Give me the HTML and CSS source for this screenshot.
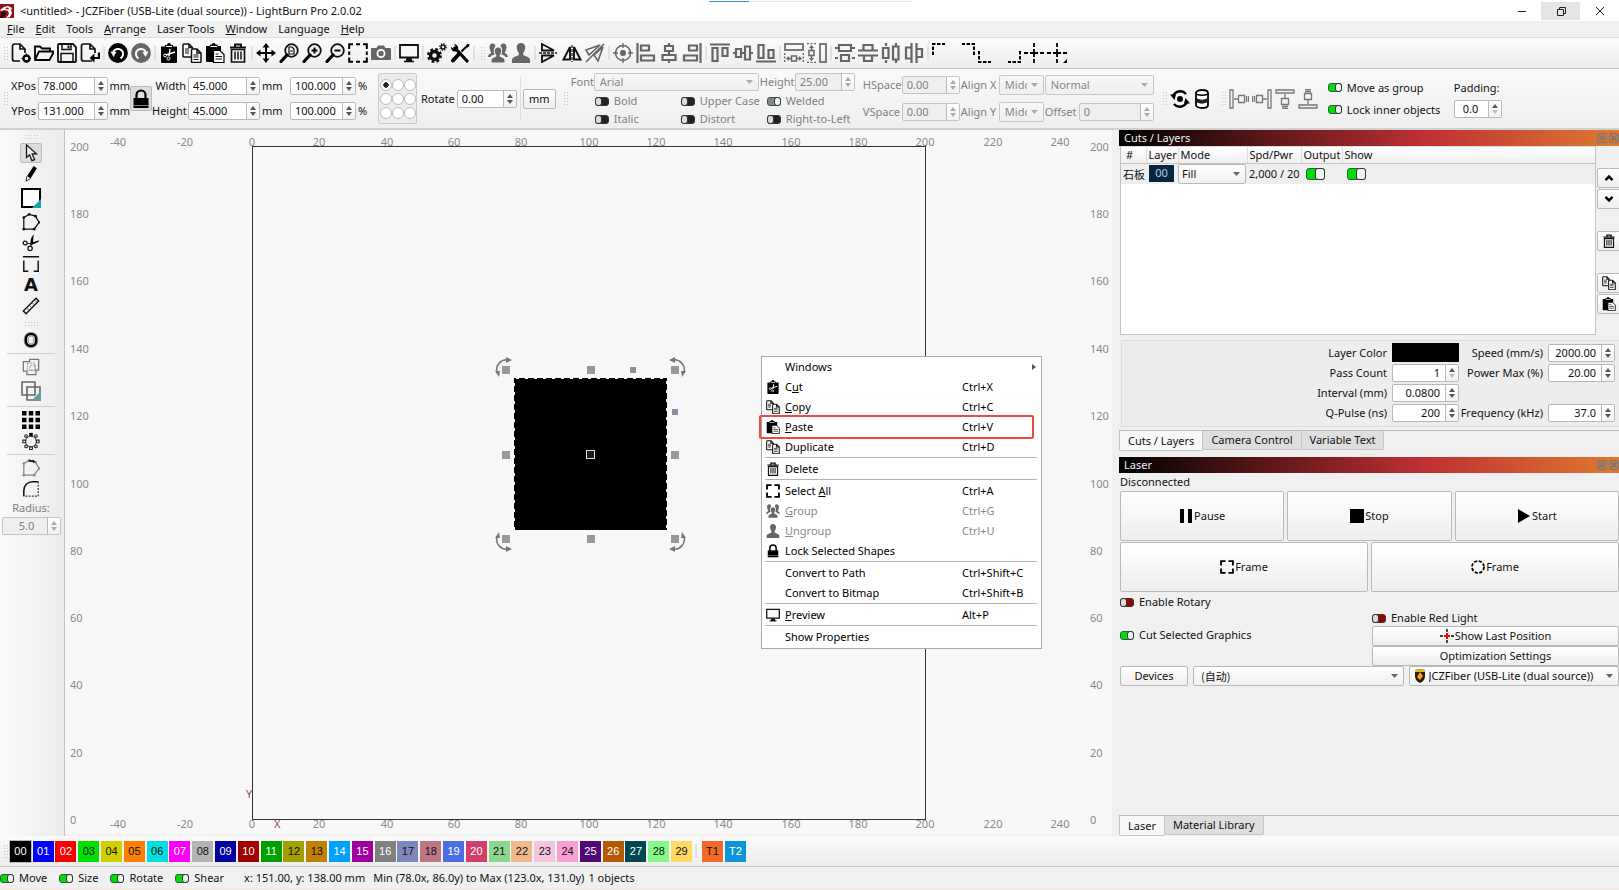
FILE: index.html
```html
<!DOCTYPE html>
<html lang="en">
<head>
<meta charset="utf-8">
<title>LightBurn Pro</title>
<link rel="stylesheet" href="styles.css">
</head>
<body>
<svg class="defs" aria-hidden="true">
  <symbol id="i-new" viewBox="0 0 20 20"><path d="M9 18H3.500a2 2 0 0 1-2-2V3a2 2 0 0 1 2-2H9l5 5v4M9 1v5h5" fill="none" stroke="#111" stroke-width="1.700"/><circle cx="15.500" cy="15.500" r="3" fill="none" stroke="#111" stroke-width="2.600"/><path d="M15.500 10.500v10M10.500 15.500h10" stroke="#111" stroke-width="1.200"/><circle cx="15.500" cy="15.500" r="1.600" fill="#fff"/></symbol>
  <symbol id="i-open" viewBox="0 0 20 20"><path d="M1 16V3.500h5l2 2h8V9" fill="none" stroke="#000" stroke-width="1.800"/><path d="M1 17 5 8.500h15L15.500 17z" fill="#f5f5f5" stroke="#000" stroke-width="1.800" stroke-linejoin="round"/></symbol>
  <symbol id="i-save" viewBox="0 0 20 20"><path d="M1 2a1 1 0 0 1 1-1h14l3 3v14a1 1 0 0 1-1 1H2a1 1 0 0 1-1-1z" fill="none" stroke="#111" stroke-width="1.800"/><path d="M5 1v5.500h9V1M4 19v-8.500h12V19" fill="none" stroke="#111" stroke-width="1.500"/><path d="M10.500 2.500h2v3h-2z" fill="#111"/></symbol>
  <symbol id="i-export" viewBox="0 0 20 20"><path d="M15 10V6l-5-5H3.500a2 2 0 0 0-2 2v13a2 2 0 0 0 2 2H12M10 1v5h5" fill="none" stroke="#111" stroke-width="1.700"/><path d="M19 9.500v5.500H13" fill="none" stroke="#000" stroke-width="2.200"/><path d="m9.500 15 5-4.500v9z" fill="#000"/></symbol>
  <symbol id="i-undo" viewBox="0 0 20 20"><circle cx="10" cy="10" r="9.900" fill="currentColor"/><path d="M5 10.500c.5-3.800 3.500-5 6-4.500 3 .6 4.800 3.500 3.800 6.500-.5 1.500-1.300 2.300-2.300 2.800" fill="none" stroke="#fff" stroke-width="2"/><path d="M2.500 8.500 8.500 9l-3 5z" fill="#fff"/></symbol>
  <symbol id="i-cut" viewBox="0 0 20 20"><path d="M2 3.500h4V2h2a2 2 0 0 1 4 0h2v1.500h4V19a1 1 0 0 1-1 1H3a1 1 0 0 1-1-1z" fill="#000"/><path d="M7 3.500h6" stroke="#fff" stroke-width="1"/><path d="m11 6-1 7M16 9l-9 3" stroke="#fff" stroke-width="1.400"/><circle cx="6" cy="12.500" r="1.400" fill="none" stroke="#fff"/><circle cx="9.500" cy="15.500" r="1.500" fill="none" stroke="#fff"/></symbol>
  <symbol id="i-copy" viewBox="0 0 20 20"><path d="M1 14V2a1 1 0 0 1 1-1h5l3.500 3.500V14H2a1 1 0 0 1-1-1zM7 1v3.500h3.500" fill="#fafafa" stroke="#111" stroke-width="1.500"/><path d="M3 6h4M3 8h4M3 10h4" stroke="#111"/><path d="M9.500 18V7a1 1 0 0 1 1-1H15l4 4v8.500a1 1 0 0 1-1 1h-7.500a1 1 0 0 1-1-1zM15 6v4h4" fill="#fafafa" stroke="#111" stroke-width="1.500"/><path d="M11.500 12h5M11.500 14h5M11.500 16.500h5" stroke="#111"/></symbol>
  <symbol id="i-paste" viewBox="0 0 20 20"><path d="M1 3h4V1.500h2a1.800 1.800 0 0 1 3.500 0h2V3H16v16H2a1 1 0 0 1-1-1z" fill="#000"/><path d="M5.500 3.500h6.500" stroke="#fff"/><path d="M8.500 7.500h6.500l4 4v8H8.500z" fill="#fff" stroke="#000" stroke-width="1.200"/><path d="M10.500 11h3M10.500 13.500h6.500M10.500 16h6.500" stroke="#111"/></symbol>
  <symbol id="i-trash" viewBox="0 0 20 20"><path d="M2 4.500h16M7 4V1.500h6V4" fill="none" stroke="#111" stroke-width="1.900"/><path d="M3.500 6.500h13V19h-13z" fill="none" stroke="#111" stroke-width="1.700"/><path d="M7 8.500v8M10 8.500v8M13 8.500v8" stroke="#111" stroke-width="1.500"/></symbol>
  <symbol id="i-move" viewBox="0 0 20 20"><path d="M10 2v16M2 10h16" stroke="#000" stroke-width="2"/><path d="m10 0 3.500 4.500h-7zM10 20l3.500-4.500h-7zM0 10l4.500-3.500v7zM20 10l-4.500-3.500v7z" fill="#000"/></symbol>
  <symbol id="i-lens" viewBox="0 0 20 20"><circle cx="12.500" cy="7.500" r="6.300" fill="none" stroke="#111" stroke-width="1.800"/><path d="m8 12-6 6.500" stroke="#000" stroke-width="3.200" stroke-linecap="round"/></symbol>
  <symbol id="i-marquee" viewBox="0 0 20 20"><path d="M1.200 6V1.200H5M8 1.200h4M15 1.200h3.800V6M18.800 8.500v3.500M18.800 14.500v4.300H15M12 18.800H8M5 18.800H1.200V14.500M1.200 12V8.500" fill="none" stroke="#000" stroke-width="2"/></symbol>
  <symbol id="i-monitor" viewBox="0 0 20 20"><path d="M1 2h18v12.500H1z" fill="#f8f8f8" stroke="#111" stroke-width="1.800"/><path d="M7.500 15h5l1 3.500h-7z" fill="#111"/><path d="M5 18.500h10" stroke="#111" stroke-width="1.500"/></symbol>
  <symbol id="i-user" viewBox="0 0 20 20"><path d="M10 0c3 0 4.500 2.200 4.200 5-.3 2.500-1.300 4-2 5v2c1 1 6.300 1.800 6.800 4.500.2 1.500 0 3.500 0 3.500H1s-.2-2 0-3.500C1.500 13.800 6.800 13 7.800 12v-2c-.7-1-1.700-2.500-2-5C5.500 2.200 7 0 10 0z" fill="#666"/></symbol>
  <symbol id="i-users" viewBox="0 0 20 20"><g fill="#666"><path d="M10 4.500c2.500 0 3.500 1.800 3.200 4-.2 1.800-1 2.800-1.500 3.500v1.500c.8.8 4.300 1.200 4.800 3.500v2.500h-13V17c.5-2.300 4-2.700 4.800-3.500V12c-.5-.7-1.300-1.700-1.500-3.500-.3-2.200.7-4 3.200-4z"/><path d="M4.500.5c2 0 3 1.300 2.800 3C5.500 5 5.500 9 6.500 11.500 6 12.200 3 12 2.800 14H0c0-3 3-3.200 3.300-4.500C2 8 1.500 5.500 1.500 4 1.700 2 2.500.5 4.500.5zM15.500.5c-2 0-3 1.300-2.800 3 1.800 1.500 1.800 5.500.8 8 .5.700 3.500.5 3.700 2.500H20c0-3-3-3.200-3.300-4.500C18 8 18.500 5.500 18.500 4c-.2-2-1-3.500-3-3.500z"/></g></symbol>
  <symbol id="i-lock" viewBox="0 0 20 20"><path d="M5.500 10V6a4.500 4.500 0 0 1 9 0v4" fill="none" stroke="#000" stroke-width="2.200"/><path d="M2.500 9h15v10h-15z" fill="#000"/><path d="M2.500 16.500h15" stroke="#999" stroke-width=".8"/></symbol>
  <symbol id="i-frame" viewBox="0 0 20 20"><path d="M1.500 8V1.500H8M12 1.500h6.500V8M18.500 12v6.500H12M8 18.500H1.500V12" fill="none" stroke="#000" stroke-width="2.600"/></symbol>
  <symbol id="i-poly" viewBox="0 0 20 20"><path d="M2 5 8 1.500l7 2 4 7L13.500 18H2z" fill="none" stroke="currentColor" stroke-width="1.400"/><g fill="currentColor"><circle cx="2" cy="5" r="1.500"/><circle cx="8" cy="1.500" r="1.500"/><circle cx="15" cy="3.500" r="1.500"/><circle cx="19" cy="10.500" r="1.300"/><circle cx="13.500" cy="18" r="1.500"/><circle cx="2" cy="18" r="1.500"/></g></symbol>
  <symbol id="i-dock" viewBox="0 0 22 10"><g fill="none" stroke="#777" stroke-width="1"><rect x=".5" y=".5" width="9" height="9" rx="1"/><rect x="3" y="3" width="4" height="4"/><path d="m1 9 8-8M1 1l8 8"/><rect x="12.500" y=".5" width="9" height="9" rx="1"/><path d="m14 2 6 6M20 2l-6 6" stroke-width="1.800"/></g></symbol>
</svg>

<header class="titlebar">
  <svg class="logo" viewBox="0 0 14 14"><rect width="14" height="14" fill="#8e1220"/><path d="M0 6 4 3l4-1 4 2-1 2 1 3-2 4-4 1 3-4-1-3-3-1-4 1z" fill="#fff"/><path d="m1 9 3-2 2 2-2 5H0z" fill="#3b0509"/><path d="m5 4 3-.5 1 1.500-2 .5z" fill="#8e1220"/></svg>
  <h1>&lt;untitled&gt; - JCZFiber (USB-Lite (dual source)) - LightBurn Pro 2.0.02</h1>
  <div class="loadbar"><i></i></div>
  <div class="winbtns">
    <button aria-label="Minimize"><svg viewBox="0 0 12 12"><path d="M2 6.500h8" stroke="#222" fill="none"/></svg></button>
    <button aria-label="Restore" class="hot"><svg viewBox="0 0 12 12"><path d="M2.500 4.500h6v6h-6zM4.500 4V2.500h6v6H9" stroke="#222" fill="none"/></svg></button>
    <button aria-label="Close"><svg viewBox="0 0 12 12"><path d="m2 2 8 8M10 2l-8 8" stroke="#222" fill="none"/></svg></button>
  </div>
</header>

<nav class="menubar">
  <a href="#"><u>F</u>ile</a><a href="#"><u>E</u>dit</a><a href="#">Tools</a><a href="#"><u>A</u>rrange</a><a href="#">Laser Tools</a><a href="#"><u>W</u>indow</a><a href="#">Language</a><a href="#"><u>H</u>elp</a>
</nav>

<div class="toolbar">
  <div class="tools">
    <span class="grip"></span>
    <button aria-label="New"><svg><use href="#i-new"/></svg></button>
    <button aria-label="Open"><svg><use href="#i-open"/></svg></button>
    <button aria-label="Save"><svg><use href="#i-save"/></svg></button>
    <button aria-label="Export"><svg><use href="#i-export"/></svg></button>
    <hr>
    <button aria-label="Undo"><svg><use href="#i-undo"/></svg></button>
    <button aria-label="Redo" class="dim"><svg viewBox="0 0 20 20"><use href="#i-undo" transform="matrix(-1 0 0 1 20 0)" width="20" height="20"/></svg></button>
    <hr>
    <button aria-label="Cut"><svg><use href="#i-cut"/></svg></button>
    <button aria-label="Copy"><svg><use href="#i-copy"/></svg></button>
    <button aria-label="Paste"><svg><use href="#i-paste"/></svg></button>
    <button aria-label="Delete"><svg><use href="#i-trash"/></svg></button>
    <hr>
    <button aria-label="Pan"><svg><use href="#i-move"/></svg></button>
    <button aria-label="Zoom to page"><svg viewBox="0 0 20 20"><use href="#i-lens" width="20" height="20"/><path d="M10 4h3l2 2v5h-5zM11 8h3" fill="none" stroke="#111" stroke-width="1.200"/></svg></button>
    <button aria-label="Zoom in"><svg viewBox="0 0 20 20"><use href="#i-lens" width="20" height="20"/><path d="M9.500 7.500h6M12.500 4.500v6" stroke="#000" stroke-width="2"/></svg></button>
    <button aria-label="Zoom out"><svg viewBox="0 0 20 20"><use href="#i-lens" width="20" height="20"/><path d="M9.500 7.500h6" stroke="#000" stroke-width="2"/></svg></button>
    <button aria-label="Frame selection"><svg><use href="#i-marquee"/></svg></button>
    <button aria-label="Camera"><svg viewBox="0 0 20 20"><path d="M1 5h4.500L7 2.500h6L14.500 5H19a1 1 0 0 1 1 1v10a1 1 0 0 1-1 1H1a1 1 0 0 1-1-1V6a1 1 0 0 1 1-1z" fill="#666"/><circle cx="10" cy="10.500" r="3.600" fill="none" stroke="#fff" stroke-width="1.700"/></svg></button>
    <hr>
    <button aria-label="Preview"><svg><use href="#i-monitor"/></svg></button>
    <hr>
    <button aria-label="Settings"><svg viewBox="0 0 20 20"><circle cx="7.500" cy="12.500" r="4" fill="none" stroke="#111" stroke-width="3.400"/><circle cx="7.500" cy="12.500" r="6.300" fill="none" stroke="#111" stroke-width="2.400" stroke-dasharray="2.700 2.250"/><circle cx="16" cy="4" r="2" fill="none" stroke="#111" stroke-width="1.500"/><circle cx="16" cy="4" r="3.300" fill="none" stroke="#111" stroke-width="1.200" stroke-dasharray="1.300 1.290"/></svg></button>
    <button aria-label="Device settings"><svg viewBox="0 0 20 20"><path d="M5 5 17 18" stroke="#000" stroke-width="3.200" stroke-linecap="round"/><path d="M1 4a4 4 0 0 0 6 4l1-2a4 4 0 0 0-4-5l2 3-2 2z" fill="#000"/><path d="m18.500 1.500-7 7" stroke="#000" stroke-width="2"/><path d="M9.500 10.500 3 17.500" stroke="#000" stroke-width="4" stroke-linecap="round"/><path d="m19.500 1-2.500.5-2 3 1 1 3-2z" fill="#000"/></svg></button>
    <hr>
  </div>
  <div class="tools">
    <span class="grip"></span>
    <button aria-label="Group"><svg><use href="#i-users"/></svg></button>
    <button aria-label="Ungroup"><svg><use href="#i-user"/></svg></button>
    <hr>
    <button aria-label="Flip vertical"><svg viewBox="0 0 20 20"><path d="M3 1 15 7.500H3zM3 12.500h12L3 19z" fill="none" stroke="#111" stroke-width="1.900"/><path d="M0 10h18" stroke="#111" stroke-width="1.400" stroke-dasharray="3 1"/></svg></button>
    <button aria-label="Flip horizontal"><svg viewBox="0 0 20 20"><path d="M8 4v12.500H1.500zM12 4v12.500h6.500z" fill="none" stroke="#111" stroke-width="1.900"/><path d="M10 2v17" stroke="#111" stroke-width="1.200" stroke-dasharray="3 1"/></svg></button>
    <button aria-label="Mirror across line"><svg viewBox="0 0 20 20"><path d="m1 7 14-5L4 12zM18 4l-5 14-4-6zM1 19 19 1" fill="none" stroke="#666" stroke-width="1.600"/></svg></button>
    <hr>
    <button aria-label="Move to centre"><svg viewBox="0 0 20 20"><circle cx="10" cy="10" r="7.500" fill="none" stroke="#666" stroke-width="1.500"/><circle cx="10" cy="10" r="3" fill="#666"/><path d="M10 0v5M10 15v5M0 10h5M15 10h5" stroke="#666" stroke-width="1.300"/></svg></button>
    <button aria-label="Align left"><svg viewBox="0 0 20 20"><path d="M1.500 0v20M5 2.500h8v5H5zM5 12.500h13v5H5z" fill="none" stroke="#666" stroke-width="2.200"/></svg></button>
    <button aria-label="Align centre"><svg viewBox="0 0 20 20"><path d="M10 0v3M10 8v4M10 17v3M6 3h8v5H6zM3.500 12h13v5h-13z" fill="none" stroke="#666" stroke-width="2.200"/></svg></button>
    <button aria-label="Align right"><svg viewBox="0 0 20 20"><path d="M18.500 0v20M7 2.500h8v5H7zM2 12.500h13v5H2z" fill="none" stroke="#666" stroke-width="2.200"/></svg></button>
    <hr>
    <button aria-label="Align top"><svg viewBox="0 0 20 20"><path d="M0 1.500h20M2.500 5h5v13h-5zM12.500 5h5v8h-5z" fill="none" stroke="#666" stroke-width="2.200"/></svg></button>
    <button aria-label="Align middle"><svg viewBox="0 0 20 20"><path d="M0 10h3M8 10h4M17 10h3M3 6h5v8H3zM12 3.500h5v13h-5z" fill="none" stroke="#666" stroke-width="2.200"/></svg></button>
    <button aria-label="Align bottom"><svg viewBox="0 0 20 20"><path d="M0 18.500h20M2.500 2h5v13h-5zM12.500 7h5v8h-5z" fill="none" stroke="#666" stroke-width="2.200"/></svg></button>
    <hr>
    <button aria-label="Same width"><svg viewBox="0 0 20 20"><rect x="1" y="1" width="18" height="6" fill="none" stroke="#666" stroke-width="1.700"/><path d="M.7 10v10M19.300 10v10" stroke="#666" stroke-width="1.300" stroke-dasharray="2 1.500"/><path d="M7.500 13h5v5h-5zM3 15.500h4M13 15.500h4" fill="none" stroke="#666" stroke-width="1.500"/><path d="m2 15.500 3-2.500v5zM18 15.500 15 13v5z" fill="#666"/></svg></button>
    <button aria-label="Same height"><svg viewBox="0 0 20 20"><rect x="13" y="1" width="6" height="18" fill="none" stroke="#666" stroke-width="1.700"/><path d="M0 .7h10M0 19.300h10" stroke="#666" stroke-width="1.300" stroke-dasharray="2 1.500"/><path d="M2 7.500h5v5H2zM4.500 3v4M4.500 13v4" fill="none" stroke="#666" stroke-width="1.500"/><path d="m4.500 2 2.500 3H2zM4.500 18 2 15h5z" fill="#666"/></svg></button>
    <hr>
    <button aria-label="Distribute vertical centred"><svg viewBox="0 0 20 20"><path d="M0 5h3M17 5h3M0 15h3M17 15h3M4 2h12v6H4zM6 12h8v6H6z" fill="none" stroke="#666" stroke-width="2.200"/></svg></button>
    <button aria-label="Distribute vertical"><svg viewBox="0 0 20 20"><path d="M0 7.500h20M0 12.500h20M5.500 2h9v5.500h-9zM6 12.500h8V18H6z" fill="none" stroke="#666" stroke-width="2.200"/></svg></button>
    <button aria-label="Distribute horizontal centred"><svg viewBox="0 0 20 20"><path d="M5 0v3M5 17v3M15 0v3M15 17v3M2 5h5.500v10H2zM12 3.500h5.500v13H12z" fill="none" stroke="#666" stroke-width="2.200"/></svg></button>
    <button aria-label="Distribute horizontal"><svg viewBox="0 0 20 20"><path d="M7.500 0v20M12.500 0v20M2 4.500h5.500v11H2zM12.500 6H18v8h-5.500z" fill="none" stroke="#666" stroke-width="2.200"/></svg></button>
    <hr>
    <button aria-label="Move to upper left"><svg viewBox="0 0 20 20"><path d="M1 12V1h12" fill="none" stroke="#000" stroke-width="2" stroke-dasharray="3.500 1.500"/></svg></button>
    <button aria-label="Move to upper right"><svg viewBox="0 0 20 20"><path d="M19 12V1H7" fill="none" stroke="#000" stroke-width="2" stroke-dasharray="3.500 1.500"/></svg></button>
    <button aria-label="Move to lower left"><svg viewBox="0 0 20 20"><path d="M1 8v11h12" fill="none" stroke="#000" stroke-width="2" stroke-dasharray="3.500 1.500"/></svg></button>
    <button aria-label="Move to lower right"><svg viewBox="0 0 20 20"><path d="M19 8v11H7" fill="none" stroke="#000" stroke-width="2" stroke-dasharray="3.500 1.500"/></svg></button>
    <button aria-label="Move to page centre"><svg viewBox="0 0 20 20"><path d="M10 0v4M10 6v8M10 16v4M0 10h4M6 10h8M16 10h4" stroke="#000" stroke-width="1.800"/></svg></button>
    <button aria-label="Move laser here"><svg viewBox="0 0 20 20"><path d="M10 0v4M10 6v8M10 16v4M0 10h4M6 10h8M16 10h4" stroke="#000" stroke-width="1.800"/><path d="M20 16v4h-4z"/></svg></button>
  </div>
</div>

<div class="props">
  <span class="grip"></span>
  <div class="pos">
    <label for="xp">XPos</label><span class="spin"><input id="xp" value="78.000"><i></i></span><span>mm</span>
    <label for="yp">YPos</label><span class="spin"><input id="yp" value="131.000"><i></i></span><span>mm</span>
  </div>
  <button class="lock" aria-label="Lock aspect"><svg><use href="#i-lock"/></svg></button>
  <div class="size">
    <label for="w">Width</label><span class="spin"><input id="w" value="45.000"><i></i></span><span>mm</span><span class="spin"><input aria-label="Width percent" value="100.000"><i></i></span><span>%</span>
    <label for="h">Height</label><span class="spin"><input id="h" value="45.000"><i></i></span><span>mm</span><span class="spin"><input aria-label="Height percent" value="100.000"><i></i></span><span>%</span>
  </div>
  <div class="anchor">
    <input type="radio" name="a" aria-label="Top left" checked><input type="radio" name="a" aria-label="Top"><input type="radio" name="a" aria-label="Top right"><input type="radio" name="a" aria-label="Left"><input type="radio" name="a" aria-label="Centre"><input type="radio" name="a" aria-label="Right"><input type="radio" name="a" aria-label="Bottom left"><input type="radio" name="a" aria-label="Bottom"><input type="radio" name="a" aria-label="Bottom right">
  </div>
  <div class="rot"><label for="rt">Rotate</label><span class="spin"><input id="rt" value="0.00"><i></i></span></div>
  <hr>
  <button class="btn unit">mm</button>
  <span class="grip"></span>
  <div class="font off">
    <div class="fontline">
      <label for="fn">Font</label><select id="fn" class="fontname" disabled><option>Arial</option></select>
      <label for="fh">Height</label><span class="spin"><input id="fh" value="25.00" disabled><i></i></span>
    </div>
    <div class="flags">
      <label><input type="checkbox" class="tg" disabled>Bold</label><label><input type="checkbox" class="tg" disabled>Upper Case</label><label><input type="checkbox" class="tg" disabled checked>Welded</label>
      <label><input type="checkbox" class="tg" disabled>Italic</label><label><input type="checkbox" class="tg" disabled>Distort</label><label><input type="checkbox" class="tg" disabled>Right-to-Left</label>
    </div>
  </div>
  <div class="spacing off">
    <label for="hs">HSpace</label><span class="spin"><input id="hs" value="0.00" disabled><i></i></span><label for="ax">Align X</label><select id="ax" disabled><option>Middle</option></select>
    <select class="wide" aria-label="Text mode" disabled><option>Normal</option></select>
    <label for="vs">VSpace</label><span class="spin"><input id="vs" value="0.00" disabled><i></i></span><label for="ay">Align Y</label><select id="ay" disabled><option>Middle</option></select>
    <label for="of">Offset</label><span class="spin"><input id="of" value="0" disabled><i></i></span>
  </div>
  <span class="grip"></span>
  <div class="pair">
    <svg viewBox="0 0 20 20"><path d="M3 8a7.500 7.500 0 0 1 13-3M17 12A7.500 7.500 0 0 1 4 15" fill="none" stroke="#000" stroke-width="2.500"/><path d="M0 5.500h6L4.500 11zM20 14.500h-6L15.500 9z"/><circle cx="10" cy="10" r="3"/></svg>
    <svg viewBox="0 0 20 20"><path d="M4 4c0-4 12-4 12 0v12c0 4-12 4-12 0z" fill="#fff" stroke="#000" stroke-width="1.800"/><path d="M4 4c0 3 12 3 12 0" fill="none" stroke="#000" stroke-width="1.600"/><path d="M5 9.500c3 1.500 7 1.500 10 0v4c-3 1.500-7 1.500-10 0z" fill="#222"/></svg>
  </div>
  <span class="grip"></span>
  <div class="pair dock4">
    <svg viewBox="0 0 20 20"><path d="M1 1h3v18H1zM9.500 6.500h6v7h-6zM5 10h4M17.500 7v6M19.500 7v6" fill="none" stroke="#777" stroke-width="1.300"/></svg>
    <svg viewBox="0 0 20 20"><path d="M16 1h3v18h-3zM4.500 6.500h6v7h-6zM11 10h4M2.500 7v6M.5 7v6" fill="none" stroke="#777" stroke-width="1.300"/></svg>
    <svg viewBox="0 0 20 20"><path d="M1 1h18v3H1zM6.500 9.500h7v6h-7zM10 5v4M7 17.500h6M7 19.500h6" fill="none" stroke="#777" stroke-width="1.300"/></svg>
    <svg viewBox="0 0 20 20"><path d="M1 16h18v3H1zM6.500 4.500h7v6h-7zM10 11v4M7 2.500h6M7 .5h6" fill="none" stroke="#777" stroke-width="1.300"/></svg>
  </div>
  <div class="moveopts">
    <label><input type="checkbox" class="tg" checked>Move as group</label>
    <label><input type="checkbox" class="tg" checked>Lock inner objects</label>
  </div>
  <div class="padding"><label for="pd">Padding:</label><span class="spin low"><input id="pd" value="0.0"><i></i></span></div>
</div>

<main>
  <aside class="side">
    <span class="hgrip"></span>
    <button class="on" aria-label="Select"><svg viewBox="0 0 20 20"><path d="M5 1v14l3.500-3 2.500 6.500 3-1.200-2.700-6.300H16z" fill="#eee" stroke="#111" stroke-width="1.400"/></svg></button>
    <button aria-label="Draw lines"><svg viewBox="0 0 20 20"><path d="m13 1 3.500 2.500-7 11.500-4-2.500z"/><path d="m5.500 12.500-1 5.500 5-3" fill="#fff" stroke="#111"/></svg></button>
    <button class="big" aria-label="Rectangle"><svg viewBox="0 0 20 20"><path d="M1 1h18v18H1z" fill="#fcfcfc" stroke="#000" stroke-width="2"/><path d="M20 11v9h-9z" fill="#16a3a0"/></svg></button>
    <button aria-label="Polygon"><svg><use href="#i-poly"/></svg></button>
    <button aria-label="Trim"><svg viewBox="0 0 20 20"><path d="M9 12 10 5l3-5-1 11zM10 10l9-3-1 2-7 3z"/><circle cx="3.500" cy="10" r="2.200" fill="none" stroke="#111" stroke-width="1.400"/><circle cx="9" cy="16" r="2.400" fill="none" stroke="#111" stroke-width="1.400"/><path d="m6 10.500 5 .5-2 3" fill="none" stroke="#111"/></svg></button>
    <button aria-label="Tabs"><svg viewBox="0 0 20 20"><path d="M1 2h18M2 6v12h5M18 6v12h-5" fill="none" stroke="#111" stroke-width="1.600"/></svg></button>
    <button aria-label="Text" class="glyph">A</button>
    <button aria-label="Measure"><svg viewBox="0 0 20 20"><path d="M1.500 15.500 15.500 1.500l3 3-14 14z" fill="none" stroke="#111" stroke-width="1.600"/><path d="m5 12 3 3M8 9l3 3M11 6l3 3M14 3.500l2 2" stroke="#555"/></svg></button>
    <span class="hgrip"></span>
    <button aria-label="Offset"><svg viewBox="0 0 20 20"><rect x="2" y="1" width="16" height="18" rx="8" fill="#777"/><rect x="4.500" y="3.500" width="11" height="13" rx="5" fill="#f6f6f6" stroke="#000" stroke-width="2.500"/><rect x="7" y="5.500" width="6" height="9" rx="3" fill="none" stroke="#888" stroke-width="1"/></svg></button>
    <hr>
    <button aria-label="Weld"><svg viewBox="0 0 20 20"><path d="M1.500 4h7V1.500h10v12h-3V18.500h-10v-4h-4z" fill="none" stroke="#777" stroke-width="1.400"/><path d="M6 5.500h8v8H6zM9 8h6v6H9z" fill="none" stroke="#999" stroke-dasharray="2 1"/></svg></button>
    <button class="mid" aria-label="Boolean"><svg viewBox="0 0 20 20"><path d="M1 1h13v13H1zM6 6h13v13H6z" fill="none" stroke="#666" stroke-width="1.600"/><path d="M20 10v10H10z" fill="#6c9a9a"/></svg></button>
    <hr>
    <button aria-label="Grid array"><svg viewBox="0 0 20 20"><path d="M0 0h5v5H0zM7.500 0h5v5h-5zM15 0h5v5h-5zM0 7.500h5v5H0zM7.500 7.500h5v5h-5zM15 7.500h5v5h-5zM0 15h5v5H0zM7.500 15h5v5h-5zM15 15h5v5h-5z"/></svg></button>
    <button aria-label="Circular array"><svg viewBox="0 0 20 20"><circle cx="10" cy="10.500" r="6" fill="none" stroke="#333"/><g fill="#fff" stroke="#222" stroke-width="1.200"><path d="M1 9h3v3H1zM16 9h3v3h-3zM8.500 16.500h3v3h-3z"/><circle cx="4.500" cy="4.500" r="1.500"/><circle cx="15.500" cy="4.500" r="1.500"/><circle cx="4.500" cy="16" r="1.500"/><circle cx="15.500" cy="16" r="1.500"/></g><path d="M8 1h4v4H8z"/></svg></button>
    <hr>
    <button aria-label="Edit nodes" class="dim"><svg viewBox="0 0 20 20"><use href="#i-poly" width="20" height="20"/><path d="M7 1.500h5v-1l3 2.500-3 1.500V3H8z" fill="#000"/></svg></button>
    <button aria-label="Radius tool"><svg viewBox="0 0 20 20"><path d="M2 18v-6C2 6 6 2 12 2h6" fill="none" stroke="#111" stroke-width="1.700"/><path d="M18 2v16H2" fill="none" stroke="#333" stroke-width="1.300" stroke-dasharray="2 1.500"/></svg></button>
    <label class="off" for="rad">Radius:</label>
    <span class="spin off"><input id="rad" value="5.0" disabled><i></i></span>
  </aside>

  <section class="canvas">
    <svg>
      <rect class="bed" x="187" y="16" width="673" height="673"/>
      <g class="axis mid">
        <text x="53" y="16">-40</text><text x="120" y="16">-20</text><text x="187" y="16">0</text><text x="254" y="16">20</text><text x="322" y="16">40</text><text x="389" y="16">60</text><text x="456" y="16">80</text><text x="524" y="16">100</text><text x="591" y="16">120</text><text x="658" y="16">140</text><text x="726" y="16">160</text><text x="793" y="16">180</text><text x="860" y="16">200</text><text x="928" y="16">220</text><text x="995" y="16">240</text>
        <text x="53" y="698">-40</text><text x="120" y="698">-20</text><text x="187" y="698">0</text><text x="254" y="698">20</text><text x="322" y="698">40</text><text x="389" y="698">60</text><text x="456" y="698">80</text><text x="524" y="698">100</text><text x="591" y="698">120</text><text x="658" y="698">140</text><text x="726" y="698">160</text><text x="793" y="698">180</text><text x="860" y="698">200</text><text x="928" y="698">220</text><text x="995" y="698">240</text>
      </g>
      <g class="axis">
        <text x="5" y="21">200</text><text x="5" y="88">180</text><text x="5" y="155">160</text><text x="5" y="223">140</text><text x="5" y="290">120</text><text x="5" y="358">100</text><text x="5" y="425">80</text><text x="5" y="492">60</text><text x="5" y="559">40</text><text x="5" y="627">20</text><text x="5" y="694">0</text>
        <text x="1025" y="21">200</text><text x="1025" y="88">180</text><text x="1025" y="155">160</text><text x="1025" y="223">140</text><text x="1025" y="290">120</text><text x="1025" y="358">100</text><text x="1025" y="425">80</text><text x="1025" y="492">60</text><text x="1025" y="559">40</text><text x="1025" y="627">20</text><text x="1025" y="694">0</text>
      </g>
      <g class="axis origin"><text x="181" y="668">Y</text><text x="209" y="698">X</text></g>
      <rect x="449" y="248" width="153" height="152"/>
      <path d="M449.500 400V248.500H601.500V400" fill="none" stroke="#f8f8f8" stroke-dasharray="3 6"/>
      <rect x="521.500" y="320.500" width="8" height="8" fill="#1c1c1c" stroke="#ddd"/>
      <g fill="#999"><path d="M437 236h8v8h-8zM522 236h8v8h-8zM606 236h8v8h-8zM437 321h8v8h-8zM606 321h8v8h-8zM437 405h8v8h-8zM522 405h8v8h-8zM606 405h8v8h-8z"/><path d="M565 237h6v6h-6zM607 279h6v6h-6z" fill="#8e8e9e"/></g>
      <g fill="none" stroke="#777" stroke-width="1.500"><path d="M432 243c-2-8 4-14 11-13M619 243c2-8-4-14-11-13M432 406c-2 8 4 14 11 13M619 406c2 8-4 14-11 13"/></g>
      <g fill="#777"><path d="m441 227 6 3-6 3zM430 241l4 6 1-6zM610 227l-6 3 6 3zM621 241l-4 6-1-6zM441 422l6-3-6-3zM430 408l4-6 1 6zM610 422l-6-3 6-3zM621 408l-4-6-1 6z"/></g>
    </svg>
    <ul class="context">
      <li><button><span></span><span>Windows</span><kbd></kbd><b class="more"></b></button></li>
      <li><button><svg><use href="#i-cut"/></svg><span>C<u>u</u>t</span><kbd>Ctrl+X</kbd></button></li>
      <li><button><svg><use href="#i-copy"/></svg><span><u>C</u>opy</span><kbd>Ctrl+C</kbd></button></li>
      <li class="marked"><button><svg><use href="#i-paste"/></svg><span><u>P</u>aste</span><kbd>Ctrl+V</kbd></button></li>
      <li><button><svg><use href="#i-copy"/></svg><span>Duplicate</span><kbd>Ctrl+D</kbd></button></li>
      <li class="line"><button><svg><use href="#i-trash"/></svg><span>Delete</span></button></li>
      <li class="line"><button><svg><use href="#i-frame"/></svg><span>Select <u>A</u>ll</span><kbd>Ctrl+A</kbd></button></li>
      <li><button disabled><svg><use href="#i-users"/></svg><span><u>G</u>roup</span><kbd>Ctrl+G</kbd></button></li>
      <li><button disabled><svg><use href="#i-user"/></svg><span><u>U</u>ngroup</span><kbd>Ctrl+U</kbd></button></li>
      <li><button><svg><use href="#i-lock"/></svg><span>Lock Selected Shapes</span></button></li>
      <li class="line"><button><span></span><span>Convert to Path</span><kbd>Ctrl+Shift+C</kbd></button></li>
      <li><button><span></span><span>Convert to Bitmap</span><kbd>Ctrl+Shift+B</kbd></button></li>
      <li class="line"><button><svg><use href="#i-monitor"/></svg><span><u>P</u>review</span><kbd>Alt+P</kbd></button></li>
      <li class="line"><button><span></span><span>Show Properties</span></button></li>
    </ul>
  </section>

  <aside class="dock">
    <h2>Cuts / Layers<svg><use href="#i-dock"/></svg></h2>
    <div class="layers">
      <div class="tablebox">
        <table>
          <thead><tr><th class="c1">#</th><th class="c2">Layer</th><th class="c3">Mode</th><th class="c4">Spd/Pwr</th><th class="c5">Output</th><th>Show</th></tr></thead>
          <tbody><tr><td class="cjk">石板</td><td><span class="chip">00</span></td><td><select aria-label="Mode"><option>Fill</option></select></td><td>2,000 / 20</td><td><input type="checkbox" class="tg lg" aria-label="Output" checked></td><td><input type="checkbox" class="tg lg" aria-label="Show" checked></td></tr></tbody>
        </table>
      </div>
      <div class="rowbtns">
        <button class="btn" aria-label="Up"><svg viewBox="0 0 20 20"><path d="m5 13 5-5 5 5" fill="none" stroke="#000" stroke-width="3.500"/></svg></button>
        <button class="btn" aria-label="Down"><svg viewBox="0 0 20 20"><path d="m5 7 5 5 5-5" fill="none" stroke="#000" stroke-width="3.500"/></svg></button>
        <button class="btn gap" aria-label="Delete layer"><svg><use href="#i-trash"/></svg></button>
        <button class="btn gap" aria-label="Copy layer"><svg><use href="#i-copy"/></svg></button>
        <button class="btn" aria-label="Paste layer"><svg><use href="#i-paste"/></svg></button>
      </div>
    </div>
    <div class="settings">
      <span class="lab">Layer Color</span><button class="color" aria-label="Layer color"></button><label for="s1">Speed (mm/s)</label><span class="spin"><input id="s1" value="2000.00"><i></i></span>
      <label for="s2">Pass Count</label><span class="spin low"><input id="s2" value="1"><i></i></span><label for="s3">Power Max (%)</label><span class="spin"><input id="s3" value="20.00"><i></i></span>
      <label for="s4">Interval (mm)</label><span class="spin"><input id="s4" value="0.0800"><i></i></span><span></span><span></span>
      <label for="s5">Q-Pulse (ns)</label><span class="spin"><input id="s5" value="200"><i></i></span><label for="s6">Frequency (kHz)</label><span class="spin"><input id="s6" value="37.0"><i></i></span>
    </div>
    <div class="tabs"><button class="cur">Cuts / Layers</button><button>Camera Control</button><button>Variable Text</button></div>
    <span class="splitter"></span>
    <h2>Laser<svg><use href="#i-dock"/></svg></h2>
    <p class="state">Disconnected</p>
    <div class="run">
      <button class="btn"><svg viewBox="0 0 14 14"><path d="M1 0h4v14H1zM9 0h4v14H9z"/></svg>Pause</button>
      <button class="btn"><svg viewBox="0 0 14 14"><path d="M0 0h14v14H0z"/></svg>Stop</button>
      <button class="btn"><svg viewBox="0 0 14 14"><path d="m1 0 12 7-12 7z"/></svg>Start</button>
    </div>
    <div class="run">
      <button class="btn"><svg><use href="#i-frame"/></svg>Frame</button>
      <button class="btn"><svg viewBox="0 0 14 14"><circle cx="7" cy="7" r="6" fill="none" stroke="#000" stroke-width="1.800" stroke-dasharray="3.200 1.510"/></svg>Frame</button>
    </div>
    <div class="opts">
      <div class="col">
        <label><input type="checkbox" class="tg">Enable Rotary</label>
        <label><input type="checkbox" class="tg" checked>Cut Selected Graphics</label>
      </div>
      <div class="col2">
        <label><input type="checkbox" class="tg">Enable Red Light</label>
        <button class="btn"><svg viewBox="0 0 14 14"><path d="M7 0v3M7 11v3M0 7h3M11 7h3" stroke="#000" stroke-width="1.400"/><path d="M7 4v6M4 7h6" stroke="#f00" stroke-width="2"/></svg>Show Last Position</button>
        <button class="btn">Optimization Settings</button>
      </div>
    </div>
    <div class="devices">
      <button class="btn">Devices</button>
      <select class="cjk" aria-label="Port"><option>(自动)</option></select>
      <div class="dev"><svg viewBox="0 0 12 14"><path d="M1 1q5-1.500 10 0v6q0 5-5 7-5-2-5-7z" fill="#2a1a08"/><path d="M1 1q5-1.500 10 0v2H1z" fill="#d9b62a"/><path d="m6 3 3 4-3 4-3-3z" fill="#ff9d1e"/></svg><select aria-label="Device"><option>JCZFiber (USB-Lite (dual source))</option></select></div>
    </div>
    <div class="fill"></div>
    <div class="tabs"><button class="cur">Laser</button><button>Material Library</button></div>
  </aside>
</main>

<div class="palette">
  <span class="grip"></span>
  <div class="swatches">
    <button class="w first" style="background:#000">00</button><button class="w" style="background:#00f">01</button><button class="w" style="background:#f00">02</button><button style="background:#00e000">03</button><button style="background:#d0d000">04</button><button style="background:#ff8000">05</button><button style="background:#00e0e0">06</button><button class="w" style="background:#f0f">07</button><button style="background:#b4b4b4">08</button><button class="w" style="background:#0000a0">09</button><button class="w" style="background:#a00000">10</button><button class="w" style="background:#00a000">11</button><button style="background:#a0a000">12</button><button style="background:#c08000">13</button><button class="w" style="background:#00a0ff">14</button><button class="w" style="background:#a000a0">15</button><button class="w" style="background:#808080">16</button><button style="background:#7d87b9">17</button><button style="background:#bb7784">18</button><button class="w" style="background:#4a6fe3">19</button><button class="w" style="background:#d33f6a">20</button><button style="background:#8cd78c">21</button><button style="background:#f0b98d">22</button><button style="background:#f6c4e1">23</button><button style="background:#fa9ed4">24</button><button class="w" style="background:#500a78">25</button><button class="w" style="background:#b45a00">26</button><button class="w" style="background:#004754">27</button><button style="background:#86fa88">28</button><button style="background:#ffdb66">29</button>
  </div>
  <hr>
  <div class="swatches two"><button style="background:#f36926">T1</button><button class="w" style="background:#0c96d9">T2</button></div>
</div>

<footer class="status">
  <label><input type="checkbox" class="tg" checked>Move</label>
  <label><input type="checkbox" class="tg" checked>Size</label>
  <label><input type="checkbox" class="tg" checked>Rotate</label>
  <label><input type="checkbox" class="tg" checked>Shear</label>
  <span class="xy">x: 151.00, y: 138.00 mm</span>
  <span>Min (78.0x, 86.0y) to Max (123.0x, 131.0y)</span>
  <span class="n">1 objects</span>
</footer>
</body>
</html>
```
FILE: styles.css
```css
*, *::before, *::after { box-sizing: border-box; }
html, body { height: 100%; margin: 0; }
body { display: flex; flex-direction: column; background: #f0f0f0; color: #111; font: 11px/16px "Noto Sans", "Noto Sans CJK SC", sans-serif; overflow: hidden; border-bottom: 1px solid #f8e3d3; }
button, input, select { font: inherit; color: inherit; margin: 0; padding: 0; border: 0; background: none; }
button svg { display: block; }
a { color: inherit; text-decoration: none; }
label { white-space: nowrap; }
.defs { position: absolute; width: 0; height: 0; }
.cjk { font-family: "Noto Sans CJK SC", sans-serif; }

.titlebar { position: relative; display: flex; align-items: center; height: 21px; background: #fff; flex: none; }
.logo { width: 14px; height: 14px; }
.titlebar h1 { margin: 0 0 0 6px; font-size: 11px; font-weight: 400; flex: 1; }
.loadbar { position: absolute; top: 1px; left: 709px; width: 203px; height: 1px; background: #e6e6e6; }
.loadbar i { display: block; width: 40px; height: 1px; background: #3f93dc; }
.winbtns { display: flex; }
.winbtns button { width: 39px; height: 18px; display: grid; place-items: center; }
.winbtns .hot { background: #e5e5e5; }
.winbtns svg { width: 12px; height: 12px; }

.menubar { display: flex; gap: 11px; padding-left: 7px; height: 16px; line-height: 15px; flex: none; }
.toolbar { display: flex; gap: 5px; height: 32px; padding-left: 3px; align-items: center; background: linear-gradient(#fbfbfb, #eee); border-top: 1px solid #ddd; border-bottom: 1px solid #c2c2c2; flex: none; }
.tools { display: flex; align-items: center; gap: 3px; }
.tools svg, .tools button { width: 20px; height: 20px; }
.tools button { color: #000; }
.tools hr, .palette hr { width: 2px; height: 14px; margin: 0; border: 0; background: #e2e2e2; flex: none; }
.tools .dim { color: #666; }
.grip { width: 5px; height: 15px; flex: none; background: radial-gradient(circle, #c4c4c4 1px, transparent 1px) 0 0 / 3px 3px; }
.hgrip { width: 15px; height: 5px; margin: 4px 0 3px; background: radial-gradient(circle, #c4c4c4 1px, transparent 1px) 0 0 / 3px 3px; }

.props { display: flex; align-items: center; height: 61px; padding-left: 3px; background: linear-gradient(#fafafa, #eee); border-bottom: 2px solid #d0d0d0; flex: none; }
.spin { display: flex; height: 18px; background: #fff; border: 1px solid #b8b8b8; border-radius: 2px; overflow: hidden; min-width: 0; }
.spin input { flex: 1; min-width: 0; width: 0; padding-left: 4px; outline: 0; }
.spin i { position: relative; width: 13px; border-left: 1px solid #bbb; background: linear-gradient(#fff, #f2f2f2); flex: none; }
.spin i::before, .spin i::after { content: ""; position: absolute; left: 3px; border: 3px solid transparent; }
.spin i::before { top: 0; border-bottom: 4px solid #555; }
.spin i::after { bottom: 0; border-top: 4px solid #555; }
.spin.low i::after { border-top-color: #bbb; }
.off { color: #808080; }
.off .spin, .spin.off { background: #efefef; border-color: #c4c4c4; }
.off .spin i::before, .spin.off i::before { border-bottom-color: #aaa; }
.off .spin i::after, .spin.off i::after { border-top-color: #aaa; }
select { appearance: none; border: 1px solid #b8b8b8; border-radius: 2px; height: 20px; padding: 0 18px 0 5px; background: url("data:image/svg+xml,%3Csvg xmlns='http://www.w3.org/2000/svg' width='8' height='5'%3E%3Cpath d='M0 0h8L4 5z' fill='%23666'/%3E%3C/svg%3E") no-repeat right 5px center / 7px 4px, linear-gradient(#fefefe, #f0f0f0); min-width: 0; }
select:disabled { opacity: 1; color: #888; border-color: #c8c8c8; background-image: url("data:image/svg+xml,%3Csvg xmlns='http://www.w3.org/2000/svg' width='8' height='5'%3E%3Cpath d='M0 0h8L4 5z' fill='%23aaa'/%3E%3C/svg%3E"), linear-gradient(#f8f8f8, #efefef); }
.btn { border: 1px solid #b9b9b9; border-radius: 2px; background: linear-gradient(#fff, #eee); }

.tg { appearance: none; position: relative; width: 14px; height: 9px; border: 1px solid #333; border-radius: 3px; background: #900; flex: none; }
.tg::before { content: ""; position: absolute; top: -1px; left: -1px; width: 7px; height: 9px; border: 1px solid #333; border-radius: 3px; background: #ddd; }
.tg:checked { background: #00e000; border-color: #355; }
.tg:checked::before { left: auto; right: -1px; background: #eef5ee; }
.tg:disabled { background: #222; }
.tg:disabled:checked { background: #888; }
.tg.lg { width: 19px; height: 12px; display: block; }
.tg.lg::before { width: 10px; height: 12px; }

.pos { display: grid; grid-template-columns: 28px 70px 20px; gap: 7px 2px; align-items: center; justify-items: end; }
.pos .spin, .size .spin { width: 100%; }
.lock { width: 22px; height: 25px; border: 1px solid #bbb; border-radius: 2px; background: #ddd; display: grid; place-items: center; flex: none; }
.lock svg { width: 20px; height: 20px; }
.size { display: grid; grid-template-columns: 34px 72px 26px 66px 10px; gap: 7px 2px; align-items: center; margin-right: 10px; }
.size label { text-align: right; }
.anchor { display: grid; grid-template-columns: repeat(3, 12px); gap: 2px 0; place-content: center; width: 39px; height: 51px; background: #ececec; border: 1px solid #ccc; border-radius: 2px; flex: none; }
.anchor input { appearance: none; width: 12px; height: 12px; border: 1px solid #bbb; border-radius: 50%; background: #fff; }
.anchor input:checked { background: radial-gradient(circle, #222 35%, #fff 42%); }
.rot { display: flex; align-items: center; gap: 2px; margin-left: 4px; }
.rot .spin { width: 60px; }
.props hr { width: 1px; height: 44px; margin: 0 2px 0 3px; border: 0; background: #ddd; }
.unit { width: 33px; height: 20px; margin-right: 7px; flex: none; }
.font { margin-left: 3px; align-self: flex-start; padding-top: 4px; }
.fontline { display: grid; grid-template-columns: 22px 165px 34px 60px; column-gap: 1px; align-items: center; }
.fontline select { height: 18px; background-color: #efefef; }
.flags { display: grid; grid-template-columns: 86px 86px 80px; row-gap: 2px; padding: 2px 0 0 24px; }
.flags label, .moveopts label, .status label, .opts label { display: flex; align-items: center; gap: 5px; }
.spacing { display: grid; grid-template-columns: 38px 58px 37px 45px 33px 75px; gap: 7px 1px; align-items: center; margin: 0 8px 0 8px; }
.spacing select { width: 100%; height: 20px; padding-right: 16px; }
.spacing .wide { grid-column: span 2; }
.pair { display: flex; gap: 2px; margin: 0 9px 0 3px; }
.pair svg { width: 20px; height: 20px; }
.dock4 { gap: 3px; margin: 0 10px 0 3px; }
.moveopts { display: grid; gap: 6px; width: 126px; }
.padding { display: grid; gap: 4px; }
.padding .spin { width: 48px; }
.padding input { padding-left: 8px; }

main { flex: 1; min-height: 0; display: grid; grid-template-columns: 65px 1fr 507px; }
.side { display: flex; flex-direction: column; align-items: center; gap: 1px; padding: 0 4px 0 2px; background: linear-gradient(90deg, #fafafa, #ececec); border-right: 1px solid #c4c4c4; }
.side button { width: 22px; height: 20px; display: grid; place-items: center; flex: none; color: #111; }
.side button.on { background: #ddd; border: 1px solid #bbb; border-radius: 2px; }
.side button.big { height: 26px; }
.side button.mid { height: 25px; }
.side .big svg, .side .mid svg { width: 20px; height: 20px; }
.side button.dim { color: #888; }
.side svg { width: 18px; height: 18px; }
.side .glyph { font: 900 18px/20px "DejaVu Sans", sans-serif; }
.side hr { width: 48px; height: 1px; margin: 2px 0; border: 0; background: #d0d0d0; }
.side .spin { width: 59px; }
.side .spin input { text-align: center; }

.canvas { position: relative; background: #f8f8f8; border-bottom: 2px solid #f2f2f2; min-width: 0; }
.canvas > svg { display: block; width: 100%; height: 100%; }
.bed { fill: none; stroke: #333; stroke-width: 1; shape-rendering: crispEdges; }
.axis { fill: #8a8a8a; }
.axis.mid { text-anchor: middle; }
.axis.origin { fill: #8b5550; }

.context { position: absolute; left: 696px; top: 226px; width: 281px; margin: 0; padding: 0 4px 1px 3px; list-style: none; background: #fff; border: 1px solid #aaa; color: #000; }
.context li { position: relative; }
.context .line { border-top: 1px solid #b4b4b4; padding-top: 1px; }
.context button { display: grid; grid-template-columns: 20px 177px 1fr; align-items: center; width: 100%; height: 20px; text-align: left; }
.context svg { width: 14px; height: 14px; margin-left: 1px; }
.context kbd { font: inherit; }
.context button:disabled { color: #888; }
.context .more { position: absolute; right: 1px; top: 7px; border: 3px solid transparent; border-left: 4px solid #555; border-right: 0; }
.context .marked::after { content: ""; position: absolute; inset: -2px 3px -2px -6px; border: 2px solid #f04a3e; border-radius: 2px; }

.dock { display: flex; flex-direction: column; padding-left: 7px; min-width: 0; }
.dock h2 { display: flex; align-items: center; justify-content: space-between; margin: 0; padding-left: 5px; height: 16px; font-size: 11px; font-weight: 400; line-height: 16px; color: #eee; background: linear-gradient(90deg, #000, #be3033 61%, #de7a30); flex: none; }
.dock h2 svg { width: 22px; height: 10px; }
.layers { display: flex; gap: 1px; height: 189px; flex: none; }
.tablebox { flex: 1; margin-left: 1px; background: #fff; border: 1px solid #c4c4c4; border-top-color: #ddd; }
table { width: 100%; border-collapse: collapse; table-layout: fixed; }
th { height: 16px; padding: 0 0 0 2px; font-weight: 400; text-align: left; border-right: 1px solid #ddd; border-bottom: 1px solid #c4c4c4; background: linear-gradient(#fff, #efefef); white-space: nowrap; line-height: 14px; }
th:last-child { border-right: 0; }
td { height: 20px; padding: 0 0 0 2px; background: #efefef; white-space: nowrap; line-height: 18px; }
.c1 { width: 25px; padding-left: 5px; }
.c2 { width: 32px; }
.c3 { width: 69px; }
.c4 { width: 54px; }
.c5 { width: 41px; }
td select { width: 68px; margin-left: -2px; padding-left: 3px; display: block; }
td .tg { margin-left: 3px; }
.chip { display: block; width: 25px; height: 17px; margin-left: 1px; line-height: 16px; text-align: center; background: #062640; color: #b8cfe4; }
.rowbtns { width: 22px; padding-top: 22px; display: flex; flex-direction: column; gap: 1px; }
.rowbtns .btn { width: 24px; height: 20px; display: grid; place-items: center; }
.rowbtns .gap { margin-top: 21px; }
.rowbtns svg { width: 14px; height: 14px; }
.settings { display: grid; grid-template-columns: 66px 67px 79px 67px; justify-content: end; gap: 2px 5px; margin: 5px 0 3px 2px; padding: 2px 4px 4px 0; border: 1px solid #dcdcdc; border-right: 0; background: #ededed; align-items: center; white-space: nowrap; flex: none; }
.settings label, .lab { display: flex; justify-content: flex-end; }
.settings .spin input { text-align: right; padding: 0 5px 0 0; }
.color { height: 19px; background: #000; }
.tabs { display: flex; border-top: 1px solid #bbb; flex: none; }
.tabs button { height: 19px; padding: 0 8px; border: 1px solid #c4c4c4; border-width: 0 1px 1px 0; border-radius: 0 0 2px 2px; background: #dedede; }
.tabs .cur { height: 20px; padding: 0 8px; background: #f8f8f8; border-left-width: 1px; }
.splitter { width: 15px; height: 3px; margin: 2px auto 1px; background: radial-gradient(circle, #c4c4c4 1px, transparent 1px) 0 0 / 3px 3px; flex: none; }
.state { margin: 0 0 0 1px; height: 18px; line-height: 18px; flex: none; }
.run { display: flex; gap: 3px; margin: 0 0 1px 1px; flex: none; }
.run .btn { flex: 1; height: 50px; display: flex; align-items: center; justify-content: center; gap: 1px; }
.run svg, .col2 svg { width: 14px; height: 14px; }
.opts { display: grid; grid-template-columns: 1fr 1fr; column-gap: 5px; margin-left: 1px; flex: none; }
.col { display: flex; flex-direction: column; gap: 17px; padding-top: 1px; }
.col2 { display: flex; flex-direction: column; padding-top: 17px; }
.col2 label { height: 16px; }
.col2 .btn { display: flex; align-items: center; justify-content: center; height: 20px; gap: 1px; }
.devices { display: grid; grid-template-columns: 68px 1fr 1fr; gap: 5px; margin-left: 1px; flex: none; }
.devices .btn { height: 20px; }
.devices select { width: 100%; padding-left: 7px; }
.devices .dev { position: relative; }
.dev svg { position: absolute; left: 5px; top: 3px; width: 12px; height: 14px; }
.devices .dev select { padding-left: 19px; }
.fill { flex: 1; }

.palette { display: flex; align-items: center; height: 31px; padding-left: 3px; background: linear-gradient(#fafafa, #eee); border-bottom: 1px solid #c2c2c2; flex: none; }
.swatches { display: grid; grid-template-columns: repeat(30, 1fr); width: 684px; margin-left: 1px; font: 11px/20px "Liberation Sans", Arial, sans-serif; justify-items: center; }
.swatches.two { grid-template-columns: 1fr 1fr; width: 46px; margin-left: 4px; }
.swatches button { width: 21px; height: 21px; }
.swatches .w { color: #fff; }
.swatches .first { outline: 1px solid #bbb; }
.palette hr { margin-left: 2px; }
.status { display: flex; align-items: center; height: 22px; flex: none; }
.status label { margin-right: 12px; }
.status .xy { margin: 0 8px 0 8px; }
.status .n { margin-left: 4px; }
```
